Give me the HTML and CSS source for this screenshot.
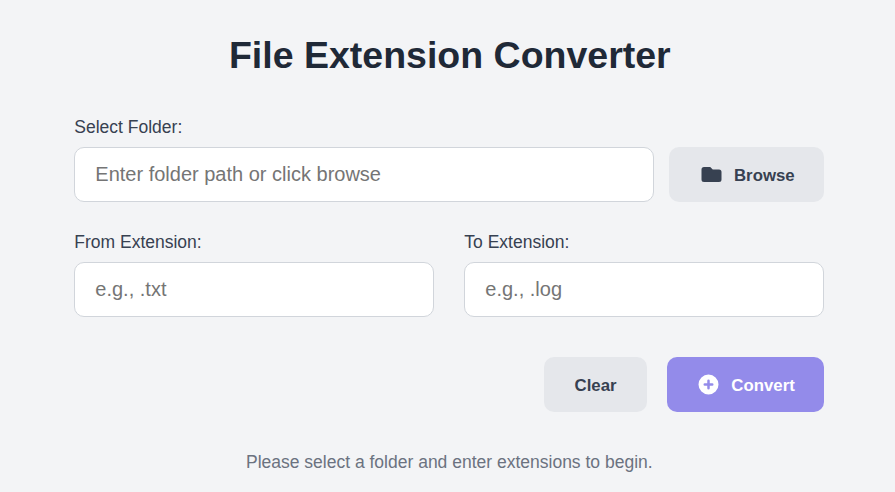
FILE: index.html
```html
<!DOCTYPE html>
<html lang="en">
<head>
<meta charset="utf-8">
<title>File Extension Converter</title>
<link rel="stylesheet" href="styles.css">
</head>
<body>
<main class="app">
  <h1 class="title">File Extension Converter</h1>
  <form class="form">
    <div class="field">
      <label class="label" for="folder">Select Folder:</label>
      <div class="folder-row">
        <input class="input" id="folder" type="text" placeholder="Enter folder path or click browse">
        <button class="btn btn-browse" type="button">
          <svg class="icon" viewBox="0 0 20 20" fill="currentColor"><path d="M2 6a2 2 0 012-2h5l2 2h5a2 2 0 012 2v6a2 2 0 01-2 2H4a2 2 0 01-2-2V6z"/></svg>
          <span>Browse</span>
        </button>
      </div>
    </div>
    <div class="extensions">
      <div class="field">
        <label class="label" for="from">From Extension:</label>
        <input class="input" id="from" type="text" placeholder="e.g., .txt">
      </div>
      <div class="field">
        <label class="label" for="to">To Extension:</label>
        <input class="input" id="to" type="text" placeholder="e.g., .log">
      </div>
    </div>
    <div class="actions">
      <button class="btn btn-clear" type="button"><span>Clear</span></button>
      <button class="btn btn-convert" type="button">
        <svg class="icon" viewBox="0 0 20 20" fill="currentColor"><path fill-rule="evenodd" d="M10 18a8 8 0 100-16 8 8 0 000 16zm1-11a1 1 0 10-2 0v2H7a1 1 0 100 2h2v2a1 1 0 102 0v-2h2a1 1 0 100-2h-2V7z" clip-rule="evenodd"/></svg>
        <span>Convert</span>
      </button>
    </div>
  </form>
  <p class="status">Please select a folder and enter extensions to begin.</p>
</main>
</body>
</html>
```
FILE: styles.css
```css
* { box-sizing: border-box; }
body {
  margin: 0;
  background: #f3f4f6;
  font-family: "Liberation Sans", Arial, sans-serif;
  color: #1f2937;
}
.app { width: 750px; margin-left: 74.3px; padding-top: 31px; }
.title {
  margin: 0 0 36px;
  padding-left: 1px;
  font-size: 37.5px;
  line-height: 48px;
  text-align: center;
  color: #1f2937;
}
.form { display: flex; flex-direction: column; gap: 30px; }
.field { display: flex; flex-direction: column; gap: 7px; min-width: 0; }
.label { font-size: 17.5px; line-height: 25px; color: #374151; }
.folder-row { display: flex; gap: 15px; }
.input {
  width: 100%;
  min-width: 0;
  flex: 1 1 auto;
  height: 55px;
  min-height: 55px;
  padding: 0 20px;
  border: 1px solid #d1d5db;
  border-radius: 10px;
  background: #fff;
  font: 20px "Liberation Sans", Arial, sans-serif;
}
.input::placeholder { color: #757575; opacity: 1; }
.extensions { display: grid; grid-template-columns: 1fr 1fr; gap: 30px; margin-top: -2px; }
.actions { display: flex; justify-content: flex-end; gap: 20px; margin-top: 10px; }
.btn {
  display: flex;
  flex: none;
  align-items: center;
  justify-content: center;
  gap: 10px;
  height: 55px;
  padding: 0;
  border: 0;
  border-radius: 10px;
  background: #e5e7eb;
  color: #374151;
  font: bold 16.8px "Liberation Sans", Arial, sans-serif;
}
.btn span { padding-top: 2px; }
.icon { width: 25px; height: 25px; }
.btn-browse { width: 155px; }
.btn-clear { width: 102.5px; }
.btn-convert { width: 157.5px; background: #938bea; color: #fff; }
.status {
  margin: 38px 0 0;
  font-size: 17.5px;
  line-height: 25px;
  text-align: center;
  color: #6b7280;
}
```
